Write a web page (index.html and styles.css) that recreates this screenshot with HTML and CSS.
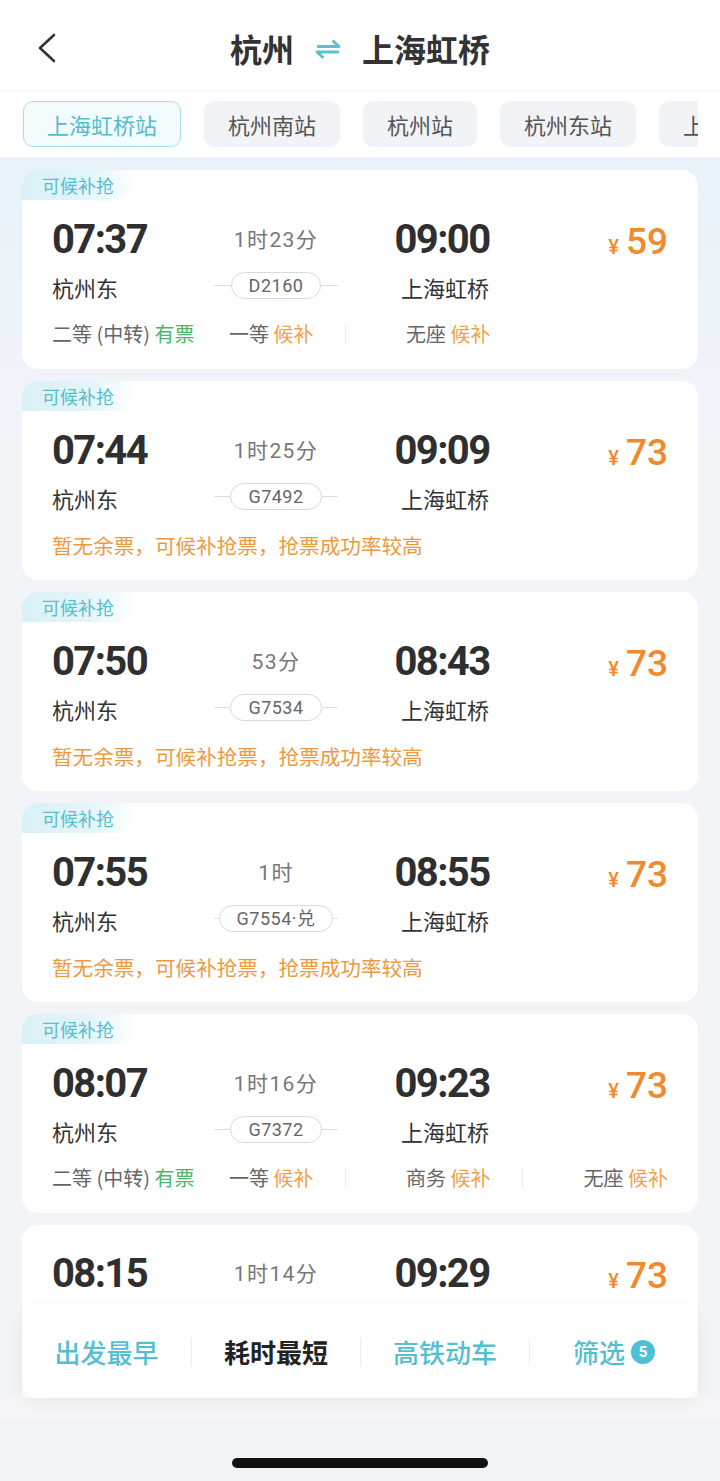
FILE: index.html
```html
<!DOCTYPE html>
<html lang="zh-CN">
<head>
<meta charset="utf-8">
<title>杭州 - 上海虹桥</title>
<link rel="stylesheet" href="styles.css">
</head>
<body>
<div class="screen">
  <header class="nav">
    <div class="back">
      <svg width="24" height="30" viewBox="0 0 24 30"><polyline points="18,2 4,15 18,28" fill="none" stroke="#333" stroke-width="2.6" stroke-linecap="round" stroke-linejoin="round"/></svg>
    </div>
    <div class="title">
      <span>杭州</span>
      <svg class="swap" width="28" height="22" viewBox="0 0 28 22"><path d="M3 8.5 H25 L18.5 2.5" fill="none" stroke="#5cc1d2" stroke-width="3" stroke-linejoin="round"/><path d="M25 14 H3 L9.5 20" fill="none" stroke="#5cc1d2" stroke-width="3" stroke-linejoin="round"/></svg>
      <span>上海虹桥</span>
    </div>
    <div class="spacer"></div>
  </header>

  <div class="stations">
    <div class="stations-clip">
      <div class="stations-track">
        <span class="tab active">上海虹桥站</span>
        <span class="tab">杭州南站</span>
        <span class="tab">杭州站</span>
        <span class="tab">杭州东站</span>
        <span class="tab">上海站</span>
      </div>
    </div>
  </div>

  <main class="list">
    <article class="card">
      <div class="tag">可候补抢</div>
      <div class="main">
        <div class="time dep">07:37</div>
        <div class="dur">1时23分</div>
        <div class="time arr">09:00</div>
        <div class="price"><span class="yen">¥</span>59</div>
        <div class="st dep-st">杭州东</div>
        <div class="train"><span class="line"></span><span class="pill">D2160</span><span class="line"></span></div>
        <div class="st arr-st">上海虹桥</div>
      </div>
      <div class="seats">
        <div class="seat">二等 (中转) <em class="ok">有票</em></div>
        <div class="seat">一等 <em class="wait">候补</em></div>
        <div class="seat c3">无座 <em class="wait">候补</em></div>
      </div>
    </article>

    <article class="card">
      <div class="tag">可候补抢</div>
      <div class="main">
        <div class="time dep">07:44</div>
        <div class="dur">1时25分</div>
        <div class="time arr">09:09</div>
        <div class="price"><span class="yen">¥</span>73</div>
        <div class="st dep-st">杭州东</div>
        <div class="train"><span class="line"></span><span class="pill">G7492</span><span class="line"></span></div>
        <div class="st arr-st">上海虹桥</div>
      </div>
      <div class="notice">暂无余票，可候补抢票，抢票成功率较高</div>
    </article>

    <article class="card">
      <div class="tag">可候补抢</div>
      <div class="main">
        <div class="time dep">07:50</div>
        <div class="dur">53分</div>
        <div class="time arr">08:43</div>
        <div class="price"><span class="yen">¥</span>73</div>
        <div class="st dep-st">杭州东</div>
        <div class="train"><span class="line"></span><span class="pill">G7534</span><span class="line"></span></div>
        <div class="st arr-st">上海虹桥</div>
      </div>
      <div class="notice">暂无余票，可候补抢票，抢票成功率较高</div>
    </article>

    <article class="card">
      <div class="tag">可候补抢</div>
      <div class="main">
        <div class="time dep">07:55</div>
        <div class="dur">1时</div>
        <div class="time arr">08:55</div>
        <div class="price"><span class="yen">¥</span>73</div>
        <div class="st dep-st">杭州东</div>
        <div class="train"><span class="line"></span><span class="pill">G7554·兑</span><span class="line"></span></div>
        <div class="st arr-st">上海虹桥</div>
      </div>
      <div class="notice">暂无余票，可候补抢票，抢票成功率较高</div>
    </article>

    <article class="card">
      <div class="tag">可候补抢</div>
      <div class="main">
        <div class="time dep">08:07</div>
        <div class="dur">1时16分</div>
        <div class="time arr">09:23</div>
        <div class="price"><span class="yen">¥</span>73</div>
        <div class="st dep-st">杭州东</div>
        <div class="train"><span class="line"></span><span class="pill">G7372</span><span class="line"></span></div>
        <div class="st arr-st">上海虹桥</div>
      </div>
      <div class="seats">
        <div class="seat">二等 (中转) <em class="ok">有票</em></div>
        <div class="seat">一等 <em class="wait">候补</em></div>
        <div class="seat c3">商务 <em class="wait">候补</em></div>
        <div class="seat c4">无座 <em class="wait">候补</em></div>
      </div>
    </article>

    <article class="card no-tag">
      <div class="main">
        <div class="time dep">08:15</div>
        <div class="dur">1时14分</div>
        <div class="time arr">09:29</div>
        <div class="price"><span class="yen">¥</span>73</div>
        <div class="st dep-st"></div>
        <div class="train"><span class="line"></span><span class="pill blank"></span><span class="line"></span></div>
        <div class="st arr-st"></div>
      </div>
    </article>
  </main>

  <div class="dock">
    <nav class="sortbar">
      <div class="sort accent">出发最早</div>
      <div class="sort current">耗时最短</div>
      <div class="sort accent">高铁动车</div>
      <div class="sort accent">筛选<span class="count">5</span></div>
    </nav>
  </div>

  <div class="home"><div class="indicator"></div></div>
</div>
</body>
</html>
```

FILE: styles.css
```css
* { box-sizing: border-box; margin: 0; padding: 0; }

html, body {
  width: 720px;
  height: 1481px;
  background: #f3f4f8;
  font-family: "Noto Sans CJK SC", "Noto Sans", sans-serif;
  color: #333;
}

.screen {
  position: relative;
  width: 720px;
  height: 1481px;
  overflow: hidden;
  display: flex;
  flex-direction: column;
}

/* header */
.nav {
  flex: none;
  height: 90px;
  background: #fff;
  display: grid;
  grid-template-columns: 90px 1fr 90px;
  align-items: center;
  position: relative;
  z-index: 2;
  box-shadow: 0 1px 3px rgba(0, 0, 0, 0.05);
}
.back { padding-left: 36px; padding-top: 6px; display: flex; }
.title {
  display: flex;
  align-items: center;
  justify-content: center;
  gap: 20px;
  font-size: 32px;
  font-weight: 700;
  color: #333;
  line-height: 40px;
  padding-top: 6px;
}
.swap { margin-top: 2px; }

/* station tabs */
.stations {
  flex: none;
  height: 67px;
  background: #fff;
  padding: 11px 22px 0 23px;
}
.stations-clip { overflow: hidden; }
.stations-track {
  display: flex;
  gap: 23px;
  white-space: nowrap;
}
.tab {
  flex: none;
  height: 46px;
  line-height: 44px;
  padding: 0 23px;
  border-radius: 10px;
  background: #f2f3f7;
  border: 1px solid #f2f3f7;
  font-size: 22px;
  color: #555;
}
.tab.active {
  background: #f3fbfc;
  border-color: #a6dfe8;
  color: #52bdcd;
}

/* list */
.list {
  flex: 1;
  overflow: hidden;
  padding: 13px 22px 0;
  display: flex;
  flex-direction: column;
  gap: 12px;
  background: linear-gradient(180deg, #e7f3f9 0, #eff4f8 160px, #f3f4f8 360px);
}

.card {
  flex: none;
  background: #fff;
  border-radius: 16px;
  padding: 0 30px 22px;
  position: relative;
}
.card.no-tag { padding-top: 27px; min-height: 200px; }

.tag {
  width: 114px;
  height: 30px;
  margin-left: -30px;
  padding-left: 20px;
  line-height: 30px;
  font-size: 18px;
  color: #58bdcc;
  border-radius: 16px 0 20px 0;
  background: linear-gradient(90deg, #d9f1f6 0, #e4f5f9 60%, rgba(236, 248, 251, 0) 100%);
  margin-bottom: 18px;
}

.main {
  display: grid;
  grid-template-columns: 162px 124px 212px 1fr;
  grid-template-rows: 44px 30px;
  row-gap: 10px;
  align-items: center;
}

.time {
  font-family: "Roboto", "Noto Sans CJK SC", sans-serif;
  font-weight: 700;
  font-size: 40px;
  line-height: 44px;
  color: #2f2f2f;
  letter-spacing: -1.6px;
}
.arr { text-align: center; padding-right: 4px; }

.dur {
  text-align: center;
  font-family: "Roboto", "Noto Sans CJK SC", sans-serif;
  font-size: 21px;
  line-height: 44px;
  color: #777;
  letter-spacing: 1.4px;
}

.price {
  align-self: start;
  text-align: right;
  font-family: "Roboto", "Noto Sans CJK SC", sans-serif;
  font-weight: 500;
  font-size: 37px;
  line-height: 48px;
  color: #f08a2c;
}
.yen {
  font-size: 20px;
  font-weight: 500;
  margin-right: 7px;
}

.st {
  font-size: 22px;
  line-height: 30px;
  color: #333;
}
.arr-st { text-align: center; padding-left: 2px; }

.train {
  display: flex;
  align-items: center;
  justify-content: center;
  margin-top: -4px;
  white-space: nowrap;
}
.line {
  width: 17px;
  height: 1px;
  background: #ddd;
}
.pill {
  flex: none;
  height: 27px;
  line-height: 25px;
  padding: 0 17px;
  border: 1px solid #d9d9d9;
  border-radius: 14px;
  font-family: "Roboto", "Noto Sans CJK SC", sans-serif;
  font-size: 18px;
  color: #666;
  letter-spacing: 0.5px;
  white-space: nowrap;
}
.pill.blank { width: 90px; }

.seats {
  margin-top: 19px;
  display: grid;
  grid-template-columns: 177px 116px 177px 1fr;
  height: 26px;
  align-items: center;
}
.seat {
  font-size: 20px;
  line-height: 22px;
  color: #666;
  white-space: nowrap;
}
.seat em { font-style: normal; }
.seat .ok { color: #4db56c; }
.seat .wait { color: #f0a247; }
.seat.c3 {
  grid-column: 3;
  border-left: 1px solid #ececec;
  padding-left: 60px;
}
.seat.c4 {
  grid-column: 4;
  border-left: 1px solid #ececec;
  text-align: right;
}

.notice {
  margin-top: 19px;
  font-size: 20.6px;
  line-height: 26px;
  color: #ec9a3f;
  white-space: nowrap;
}

/* floating sort bar */
.dock {
  position: absolute;
  left: 0;
  right: 0;
  top: 1305px;
  height: 115px;
  background: linear-gradient(180deg, rgba(246, 246, 249, 0) 0, rgba(246, 246, 249, 0) 92px, #f6f6f9 93px);
  padding: 0 22px;
}
.sortbar {
  height: 93px;
  background: #fff;
  border-radius: 16px;
  box-shadow: 0 4px 18px rgba(0, 0, 0, 0.06);
  display: grid;
  grid-template-columns: repeat(4, 1fr);
  align-items: center;
}
.sort {
  display: flex;
  align-items: center;
  justify-content: center;
  font-size: 26px;
  line-height: 28px;
  font-weight: 500;
}
.sort + .sort { border-left: 1px solid #eeeeee; }
.sort.accent { color: #55bfd2; }
.sort.current { color: #222; font-weight: 700; }
.count {
  width: 24px;
  height: 24px;
  margin-left: 6px;
  border-radius: 50%;
  background: #4ec0d6;
  color: #fff;
  font-family: "Roboto", sans-serif;
  font-weight: 700;
  font-size: 15px;
  line-height: 24px;
  text-align: center;
}

/* home indicator */
.home {
  flex: none;
  height: 61px;
  background: #f3f4f8;
  display: flex;
  justify-content: center;
  padding-top: 38px;
  position: relative;
  z-index: 1;
}
.indicator {
  width: 256px;
  height: 10px;
  border-radius: 5px;
  background: #111;
}
```
